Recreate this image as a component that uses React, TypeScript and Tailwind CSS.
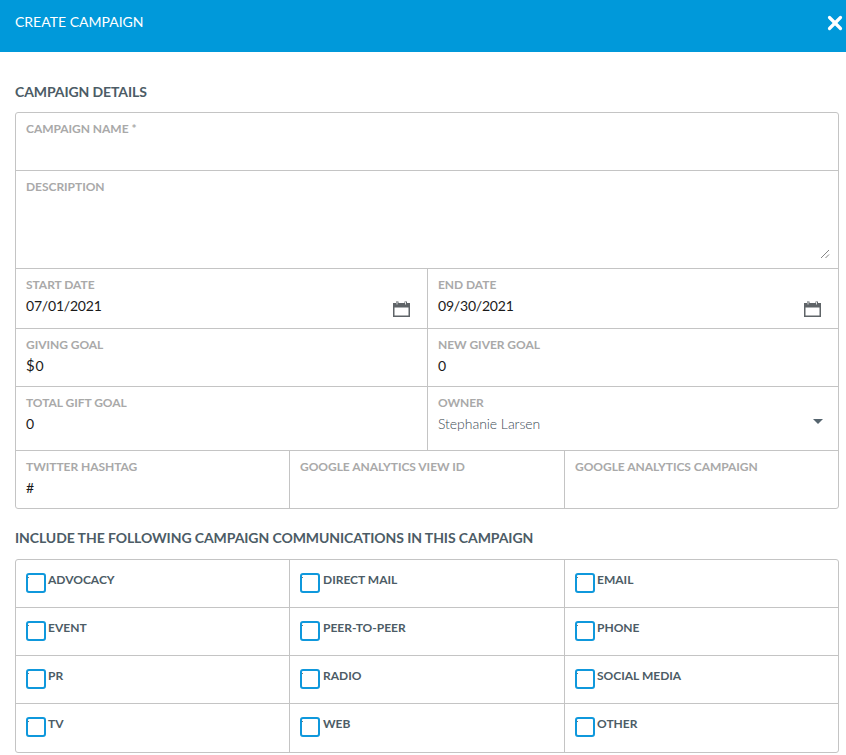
import React from 'react';
import { X } from 'lucide-react';

const labelClass = 'block text-[12px] leading-[16px] font-bold text-[#a9a9a9] uppercase tracking-[-0.04px]';
const valueClass = 'text-[14px] leading-[20px] text-[#1a1a1a] tracking-[-0.2px]';

const Calendar = () => (
  <svg width="17" height="16" viewBox="0 0 17 16" className="absolute right-[17px] bottom-[11px]" fill="none">
    <path fillRule="evenodd" d="M0 2h17v14H0V2zm1.5 4.5v8h14v-8h-14z" fill="#5f6468" />
    <path d="M3 0.5h2.5V3H3zM11.5 0.5H14V3h-2.5z" fill="#5f6468" />
    <path d="M4 1v2.5M12.5 1v2.5" stroke="#ffffff" strokeWidth="0.8" />
  </svg>
);

const Field = ({ label, value, className = '', calendar = false }: { label: string; value?: React.ReactNode; className?: string; calendar?: boolean }) => (
  <div className={`relative px-[10px] pt-[8px] ${className}`}>
    <label className={labelClass}>{label}</label>
    {value && <div className={`${valueClass} mt-[3px]`}>{value}</div>}
    {calendar && <Calendar />}
  </div>
);

const channels = ['Advocacy', 'Direct Mail', 'Email', 'Event', 'Peer-to-Peer', 'Phone', 'PR', 'Radio', 'Social Media', 'TV', 'Web', 'Other'];

const Channel = ({ name, index }: { name: string; index: number }) => (
  <div className={`flex items-start h-[48px] pl-[10px] pt-[13px] ${index % 3 !== 2 ? 'border-r border-[#c4c4c4]' : ''} ${index < 9 ? 'border-b border-[#c4c4c4]' : ''}`}>
    <span className="relative w-[20px] h-[20px] shrink-0 rounded-[3px] border-2 border-[#0f98dc] bg-white">
      <span className="absolute left-0 top-[2px] w-[1px] h-[1px] bg-[#777]" />
    </span>
    <span className={`${index % 3 === 1 ? 'ml-[3px]' : 'ml-[2px]'} -mt-[1px] text-[12px] leading-[16px] font-bold text-[#4c5c66] uppercase`}>{name}</span>
  </div>
);

export default function App() {
  return (
    <div className="w-[846px] h-[755px] overflow-hidden bg-white font-['Lato',sans-serif]">
      {/* Header */}
      <div className="relative h-[52px] bg-[#0099da] flex items-start px-[15px] pt-[13px]">
        <h1 className="text-[14px] leading-[18px] text-white font-normal uppercase">Create Campaign</h1>
        <X className="absolute right-0 top-[12px] text-white" size={22} strokeWidth={3.5} />
      </div>

      <div className="px-[15px]">
        <h2 className="mt-[31px] text-[14px] leading-[18px] font-bold text-[#4c5c66] uppercase tracking-[-0.1px]">Campaign Details</h2>

        {/* Details */}
        <div className="mt-[11px] w-[824px] border border-[#c4c4c4] rounded-[3px]">
          <Field label="Campaign Name *" className="h-[58px] border-b border-[#c4c4c4]" />
          <div className="relative h-[98px] border-b border-[#c4c4c4] px-[10px] pt-[8px]">
            <label className={labelClass}>Description</label>
            <svg width="10" height="10" viewBox="0 0 10 10" className="absolute right-[8px] bottom-[9px]" fill="none">
              <path d="M1 9L9 1M5.5 9L9 5.5" stroke="#666" strokeWidth="0.8" />
            </svg>
          </div>
          <div className="grid grid-cols-[412px_1fr] h-[60px] border-b border-[#c4c4c4]">
            <Field label="Start Date" value="07/01/2021" className="border-r border-[#c4c4c4]" calendar />
            <Field label="End Date" value="09/30/2021" calendar />
          </div>
          <div className="grid grid-cols-[412px_1fr] h-[58px] border-b border-[#c4c4c4]">
            <Field label="Giving Goal" value={<><span className="mr-[1px] text-[15px] leading-[0]">$</span>0</>} className="border-r border-[#c4c4c4]" />
            <Field label="New Giver Goal" value="0" />
          </div>
          <div className="grid grid-cols-[412px_1fr] h-[64px] border-b border-[#c4c4c4]">
            <Field label="Total Gift Goal" value="0" className="border-r border-[#c4c4c4]" />
            <div className="relative px-[10px] pt-[8px]">
              <label className={labelClass}>Owner</label>
              <div className="mt-[3px] text-[14px] leading-[20px] font-light text-[#3c4b55] tracking-[-0.05px]">Stephanie Larsen</div>
              <span className="absolute right-[15px] top-[32px] w-0 h-0 border-x-[5px] border-x-transparent border-t-[5px] border-t-[#55646e]" />
            </div>
          </div>
          <div className="grid grid-cols-[274px_275px_1fr] h-[57px]">
            <Field label="Twitter Hashtag" value="#" className="border-r border-[#c4c4c4]" />
            <Field label="Google Analytics View ID" className="border-r border-[#c4c4c4]" />
            <Field label="Google Analytics Campaign" />
          </div>
        </div>

        <h2 className="mt-[20px] text-[14px] leading-[18px] font-bold text-[#4c5c66] uppercase tracking-[-0.08px]">
          Include the following campaign communications in this campaign
        </h2>

        {/* Communications */}
        <div className="mt-[12px] w-[824px] border border-[#c4c4c4] rounded-[3px] grid grid-cols-[274px_275px_1fr]">
          {channels.map((name, i) => (
            <Channel key={name} name={name} index={i} />
          ))}
        </div>
      </div>
    </div>
  );
}
